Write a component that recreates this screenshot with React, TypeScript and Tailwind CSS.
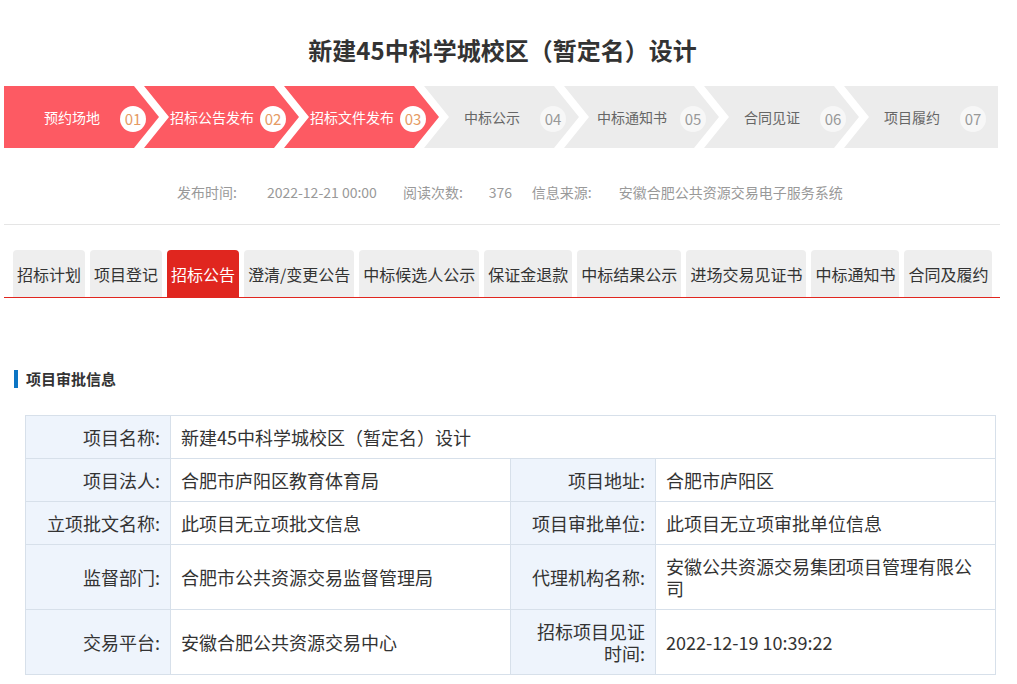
const steps = [
  { label: '预约场地', no: '01', done: true },
  { label: '招标公告发布', no: '02', done: true },
  { label: '招标文件发布', no: '03', done: true },
  { label: '中标公示', no: '04', done: false },
  { label: '中标通知书', no: '05', done: false },
  { label: '合同见证', no: '06', done: false },
  { label: '项目履约', no: '07', done: false },
];

const tabs = [
  '招标计划',
  '项目登记',
  '招标公告',
  '澄清/变更公告',
  '中标候选人公示',
  '保证金退款',
  '中标结果公示',
  '进场交易见证书',
  '中标通知书',
  '合同及履约',
];

const FONT = { fontFamily: '"Microsoft YaHei", "Noto Sans CJK SC", "Noto Sans", sans-serif' };

function Step({ label, no, done, index }: { label: string; no: string; done: boolean; index: number }) {
  const first = index === 0;
  const last = index === steps.length - 1;
  const clip = first
    ? 'polygon(0 0, calc(100% - 25px) 0, 100% 50%, calc(100% - 25px) 100%, 0 100%)'
    : last
    ? 'polygon(0 0, 100% 0, 100% 100%, 0 100%, 25px 50%)'
    : 'polygon(0 0, calc(100% - 25px) 0, 100% 50%, calc(100% - 25px) 100%, 0 100%, 25px 50%)';
  return (
    <div
      className={`flex items-center h-[62px] shrink-0 ${last ? 'w-[154px]' : 'w-[155px]'} ${
        first ? '' : 'ml-[-15px]'
      } ${done ? 'bg-[#fd5a63] text-white' : 'bg-[#ececec] text-[#666]'}`}
      style={{ clipPath: clip }}
    >
      <div className="ml-[20px] w-[96px] text-center text-[14px] leading-[20px] whitespace-nowrap">{label}</div>
      <div
        className={`mt-[3px] w-[26px] h-[26px] rounded-full flex items-center justify-center text-[15px] leading-none ${
          done ? 'bg-white text-[#e69a63]' : 'bg-[#f7f7f7] text-[#999]'
        }`}
      >
        {no}
      </div>
    </div>
  );
}

function Label({ children }: { children: React.ReactNode }) {
  return (
    <td className="w-[145px] bg-[#eef4fc] border border-[#d7e0ea] text-right pl-[10px] pr-[10px] align-middle">
      {children}
    </td>
  );
}

function Value({ children, span }: { children: React.ReactNode; span?: number }) {
  return (
    <td colSpan={span} className="border border-[#d7e0ea] pl-[10px] pr-[10px] align-middle">
      {children}
    </td>
  );
}

export default function App() {
  return (
    <div className="w-[1017px] h-[684px] overflow-hidden bg-white text-[#333]" style={FONT}>
      {/* 标题 */}
      <h1 className="pt-[33px] h-[86px] pr-[12px] text-center text-[24px] font-bold leading-[34px] text-[#333]">
        新建45中科学城校区（暂定名）设计
      </h1>

      {/* 流程 */}
      <div className="flex ml-[4px]">
        {steps.map((s, i) => (
          <Step key={s.no} {...s} index={i} />
        ))}
      </div>

      {/* 发布信息 */}
      <div className="mt-[32px] flex pl-[177px] text-[14px] leading-[24px] text-[#999] whitespace-nowrap">
        <span>发布时间:</span>
        <span className="ml-[30px] w-[118px]">2022-12-21 00:00</span>
        <span className="ml-[18px]">阅读次数:</span>
        <span className="ml-[26px] w-[25px]">376</span>
        <span className="ml-[18px]">信息来源:</span>
        <span className="ml-[27px]">安徽合肥公共资源交易电子服务系统</span>
      </div>
      <div className="mt-[20px] mx-[4px] w-[996px] border-t border-[#e5e5e5]" />

      {/* 标签页 */}
      <div className="mt-[25px] mx-[4px] w-[996px] border-b border-[#e0261f] flex gap-[5px] pl-[9px]">
        {tabs.map((t) => (
          <div
            key={t}
            className={`h-[47px] px-[4px] flex items-center rounded-t-[4px] text-[16px] whitespace-nowrap ${
              t === '招标公告' ? 'bg-[#e0261f] text-white' : 'bg-[#eeeeee] text-[#333]'
            }`}
          >
            {t}
          </div>
        ))}
      </div>

      {/* 项目审批信息 */}
      <div className="mt-[71px] ml-[14px] flex items-center gap-[8px]">
        <div className="w-[4px] h-[18px] bg-[#0d75c4]" />
        <h2 className="text-[15px] font-bold leading-[20px] text-[#333]">项目审批信息</h2>
      </div>

      <table className="mt-[26px] ml-[25px] w-[970px] border-collapse text-[18px] leading-[22px] text-[#333] table-fixed">
        <colgroup>
          <col className="w-[145px]" />
          <col className="w-[340px]" />
          <col className="w-[145px]" />
          <col className="w-[340px]" />
        </colgroup>
        <tbody>
          <tr className="h-[43px]">
            <Label>项目名称:</Label>
            <Value span={3}>新建45中科学城校区（暂定名）设计</Value>
          </tr>
          <tr className="h-[43px]">
            <Label>项目法人:</Label>
            <Value>合肥市庐阳区教育体育局</Value>
            <Label>项目地址:</Label>
            <Value>合肥市庐阳区</Value>
          </tr>
          <tr className="h-[43px]">
            <Label>立项批文名称:</Label>
            <Value>此项目无立项批文信息</Value>
            <Label>项目审批单位:</Label>
            <Value>此项目无立项审批单位信息</Value>
          </tr>
          <tr className="h-[65px]">
            <Label>监督部门:</Label>
            <Value>合肥市公共资源交易监督管理局</Value>
            <Label>代理机构名称:</Label>
            <Value>安徽公共资源交易集团项目管理有限公司</Value>
          </tr>
          <tr className="h-[65px]">
            <Label>交易平台:</Label>
            <Value>安徽合肥公共资源交易中心</Value>
            <Label>招标项目见证时间:</Label>
            <Value>2022-12-19 10:39:22</Value>
          </tr>
        </tbody>
      </table>
    </div>
  );
}
